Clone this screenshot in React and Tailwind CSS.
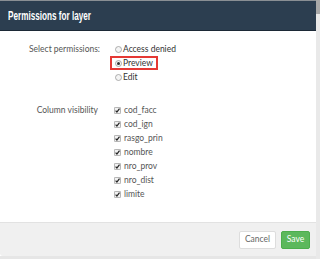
import React from 'react'

const Radio = ({ checked }) => (
  <svg width="7" height="7" viewBox="0 0 7 7" className="shrink-0">
    <circle cx="3.5" cy="3.5" r="3" fill="#f4f4f4" stroke="#9a9a9a" strokeWidth="0.8" />
    {checked && <circle cx="3.5" cy="3.5" r="1.5" fill="#333" />}
  </svg>
)

const Check = () => (
  <svg width="7" height="7" viewBox="0 0 7 7" className="shrink-0">
    <rect x="0.4" y="0.4" width="6.2" height="6.2" rx="0.8" fill="#f2f2f2" stroke="#9a9a9a" strokeWidth="0.8" />
    <path d="M1.6 3.7 L2.9 5 L5.5 1.6" fill="none" stroke="#222" strokeWidth="1.2" />
  </svg>
)

const columns = ['cod_facc', 'cod_ign', 'rasgo_prin', 'nombre', 'nro_prov', 'nro_dist', 'limite']

export default function App() {
  return (
    <div className="w-[320px] h-[259px] flex bg-white overflow-hidden" style={{ fontFamily: 'Lato, "Open Sans", sans-serif' }}>
      <div className="w-[316px] flex flex-col">
        <div className="h-[1px] bg-[#8a8f94]" />
        <header className="h-[30px] bg-[#2c3e50] border-b border-[#1c2936] flex items-center px-[8px]">
          <h1 className="text-white font-bold text-[12px] scale-x-[0.68] origin-left whitespace-nowrap" style={{ fontFamily: '"Liberation Sans", sans-serif' }}>
            Permissions for layer
          </h1>
        </header>
        <main className="h-[191px] pt-[11px] text-[8.5px] text-[#555]">
          <div className="flex">
            <div className="w-[100px] text-right leading-[14px]">Select permissions:</div>
            <div className="ml-[15px] flex flex-col">
              <label className="flex items-center gap-[1px] h-[14px] text-[#333]"><Radio />Access denied</label>
              <label className="flex items-center gap-[1px] h-[14px] w-[48px] -ml-[5px] pl-[3px] border-2 border-[#e53935] text-[#333]"><Radio checked />Preview</label>
              <label className="flex items-center gap-[1px] h-[14px] text-[#333]"><Radio />Edit</label>
            </div>
          </div>
          <div className="flex mt-[19px]">
            <div className="w-[98px] text-right leading-[14px]">Column visibility</div>
            <div className="ml-[16px] flex flex-col">
              {columns.map(c => (
                <label key={c} className="flex items-center gap-[3px] h-[14px] text-[#555]"><Check />{c}</label>
              ))}
            </div>
          </div>
        </main>
        <footer className="h-[34px] bg-[#f0f0f0] border-t border-[#e2e2e2] rounded-bl-[3px] flex items-center justify-end gap-[5px] pr-[6px] text-[8.5px]">
          <button className="h-[18px] w-[37px] bg-white border border-[#ddd] rounded-[2px] text-[#666]">Cancel</button>
          <button className="h-[18px] w-[29px] bg-[#5cb85c] border border-[#4cae4c] rounded-[2px] text-white">Save</button>
        </footer>
        <div className="h-[3px] bg-[#e6e6e6]" />
      </div>
      <div className="w-[4px] flex flex-col">
        <div className="h-[14px] bg-[#a9a9a9]" />
        <div className="flex-1 bg-[#e9e9e9]" />
      </div>
    </div>
  )
}
